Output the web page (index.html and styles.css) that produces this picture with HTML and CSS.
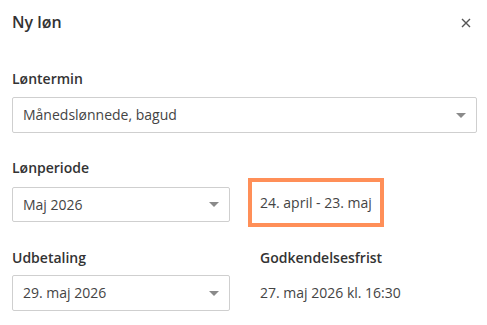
FILE: index.html
```html
<!DOCTYPE html>
<html lang="da">
<head>
<meta charset="utf-8">
<title>Ny løn</title>
<link rel="stylesheet" href="styles.css">
</head>
<body>
<div class="dialog">
  <div class="header">
    <h1 class="title">Ny løn</h1>
    <button class="close" aria-label="Luk">
      <svg width="10" height="10" viewBox="0 0 10 10"><path d="M1 1L9 9M9 1L1 9" stroke="#555" stroke-width="1.4" fill="none"/></svg>
    </button>
  </div>

  <div class="field">
    <div class="label">Løntermin</div>
    <div class="select select-wide"><span>Månedslønnede, bagud</span><i class="caret"></i></div>
  </div>

  <div class="label label-period">Lønperiode</div>
  <div class="row row-period">
    <div class="select select-period"><span>Maj 2026</span><i class="caret"></i></div>
    <div class="period-box">24. april - 23. maj</div>
  </div>

  <div class="row row-labels">
    <div class="label">Udbetaling</div>
    <div class="label indent">Godkendelsesfrist</div>
  </div>
  <div class="row row-pay">
    <div class="select"><span>29. maj 2026</span><i class="caret"></i></div>
    <div class="value indent">27. maj 2026 kl. 16:30</div>
  </div>
</div>
</body>
</html>
```

FILE: styles.css
```css
* { box-sizing: border-box; }
html, body { margin: 0; padding: 0; background: #fff; }
body {
  font-family: "Open Sans", "Liberation Sans", sans-serif;
  color: #333;
  font-size: 14px;
  line-height: 20px;
}
.dialog {
  width: 487px;
  padding: 11px 10px 0 12px;
}
.header {
  display: flex;
  align-items: center;
  justify-content: space-between;
  height: 22px;
}
.title {
  margin: 0;
  font-size: 16px;
  font-weight: 600;
  line-height: 22px;
  color: #333;
}
.close {
  border: 0;
  background: none;
  padding: 0;
  width: 10px;
  height: 10px;
  margin-right: 6px;
  margin-top: 2px;
  display: flex;
}
.field { margin-top: 36px; }
.label {
  font-weight: 600;
  color: #333;
  line-height: 20px;
}
.select {
  height: 36px;
  border: 1px solid #cfcfcf;
  border-radius: 2px;
  display: flex;
  align-items: center;
  justify-content: space-between;
  padding: 0 10px 0 10px;
  color: #444;
  margin-top: 8px;
}
.select-wide { width: 465px; }
.caret {
  width: 0;
  height: 0;
  border-left: 5px solid transparent;
  border-right: 5px solid transparent;
  border-top: 5px solid #8a8a8a;
}
.label-period { margin-top: 25px; }
.row {
  display: grid;
  grid-template-columns: 218px 1fr;
  column-gap: 18px;
  align-items: center;
}
.row .select { margin-top: 0; }
.row .select-period {
  align-self: start;
  margin-top: 9px;
  height: 35px;
}
.period-box {
  justify-self: start;
  border: 4px solid #ff8f58;
  height: 49px;
  display: flex;
  align-items: center;
  padding: 0 8px;
  color: #444;
}
.row-labels { margin-top: 21px; }
.row-pay { margin-top: 7px; }
.indent { padding-left: 12px; }
.value { color: #444; }
```
